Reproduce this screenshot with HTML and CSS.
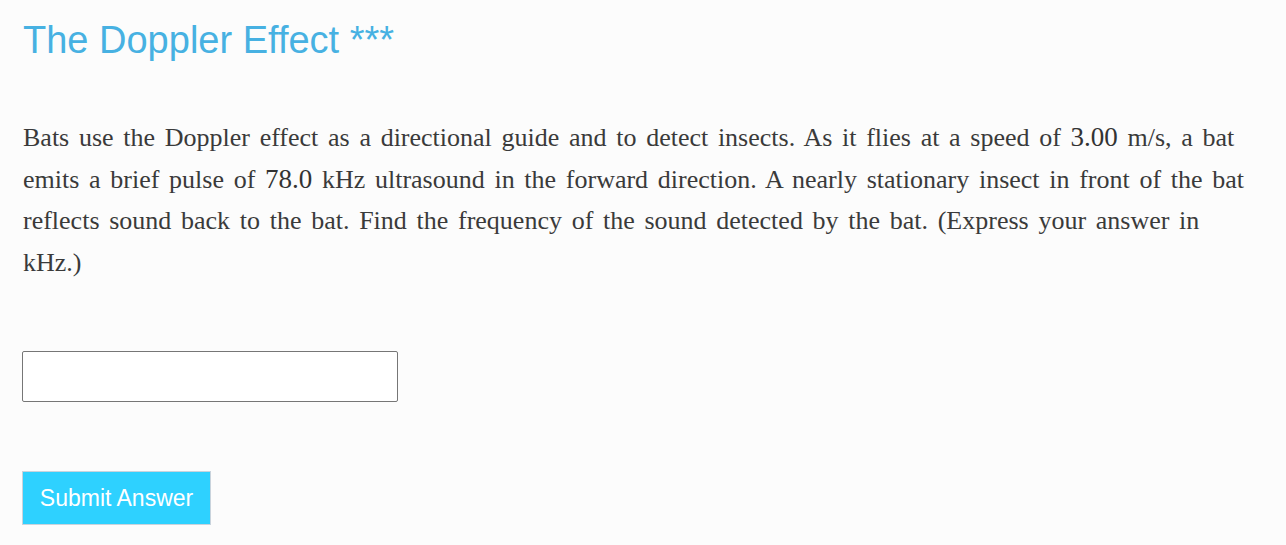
FILE: index.html
```html
<!DOCTYPE html>
<html>
<head>
<meta charset="utf-8">
<link rel="stylesheet" href="styles.css">
</head>
<body>
<div class="page">
  <h1 class="title">The Doppler Effect ***</h1>
  <p class="question">Bats use the Doppler effect as a directional guide and to detect insects. As it flies at a speed of <span class="num">3.00</span> m/s, a bat emits a brief pulse of <span class="num">78.0</span> kHz ultrasound in the forward direction. A nearly stationary insect in front of the bat reflects sound back to the bat. Find the frequency of the sound detected by the bat. (Express your answer in kHz.)</p>
  <input class="answer" type="text">
  <button class="submit" type="button">Submit Answer</button>
</div>
</body>
</html>
```
FILE: styles.css
```css
html, body {
  margin: 0;
  padding: 0;
  background: #fcfcfc;
}
.page {
  padding: 16px 23px 0 23px;
  display: flex;
  flex-direction: column;
  align-items: flex-start;
}
.title {
  margin: 0;
  font-family: "Liberation Sans", Arial, sans-serif;
  font-weight: normal;
  font-size: 38px;
  line-height: 48px;
  color: #47b1e2;
}
.question {
  margin: 53px 0 0 0;
  font-family: "Liberation Serif", "Times New Roman", serif;
  font-size: 26px;
  line-height: 41.6px;
  word-spacing: 3.2px;
  color: #3a3a3a;
}
.num {
  font-size: 27px;
  color: #333;
}
.answer {
  margin-top: 68px;
  width: 376px;
  height: 51px;
  box-sizing: border-box;
  border: 1px solid #767676;
  border-radius: 2px;
  background: #fff;
  margin-left: -1px;
}
.submit {
  margin-top: 69px;
  margin-left: -1px;
  width: 189px;
  height: 54px;
  box-sizing: border-box;
  background: #2ed1ff;
  border: 1px solid #c9d3dc;
  color: #fff;
  font-family: "Liberation Sans", Arial, sans-serif;
  font-size: 23px;
  padding: 0;
}
```
